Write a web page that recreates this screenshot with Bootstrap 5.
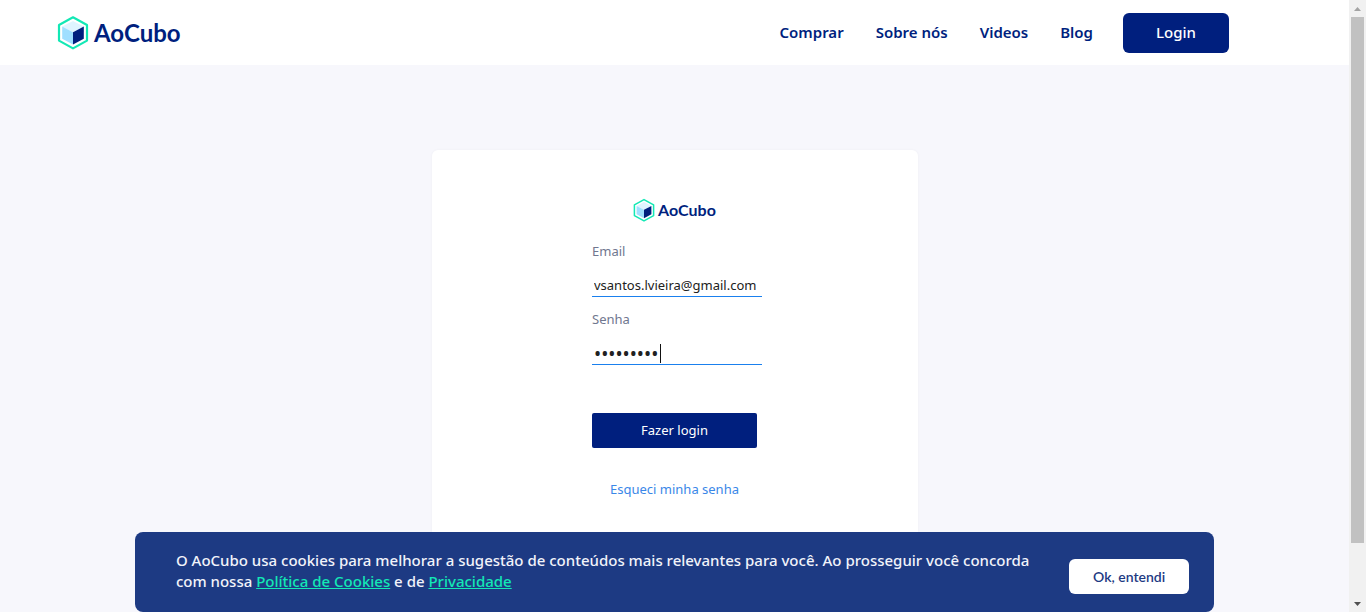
<!DOCTYPE html>
<html lang="pt-BR">
<head>
<meta charset="utf-8">
<meta name="viewport" content="width=device-width, initial-scale=1">
<title>AoCubo - Login</title>
<link href="https://cdn.jsdelivr.net/npm/bootstrap@5.3.0/dist/css/bootstrap.min.css" rel="stylesheet">
<style>
  :root { --navy: #001f7e; --mint: #13e8b5; }
  body { font-family: "Noto Sans", "Open Sans", sans-serif; font-size: 13px; background: #f7f7fc; }
  .page-top { min-height: 65px; padding: 0 120px 0 57px; }
  .brand { font-family: Lato, sans-serif; font-weight: 700; color: var(--navy); line-height: 1; font-size: 24px; gap: 5px; }
  .brand:hover { color: var(--navy); }
  .brand svg { width: 32px; height: 35px; }
  .brand-sm { font-size: 16px; gap: 3px; }
  .brand-sm svg { width: 22px; height: 24px; }
  .menu { gap: 30px; }
  .menu-links { gap: 32px; }
  .menu a { color: var(--navy); font-size: 15px; font-weight: 600; text-decoration: none; }
  .btn-navy { --bs-btn-bg: var(--navy); --bs-btn-color: #fff; --bs-btn-hover-bg: #00175f; --bs-btn-hover-color: #fff; border: 0; }
  .btn-top { width: 106px; height: 40px; padding: 0; font-size: 15px; font-weight: 500; border-radius: 6px; }
  .login-card { width: 486px; min-height: 440px; margin-top: 85px; padding-top: 48px; border-radius: 6px; box-shadow: 0 0 3px rgba(0, 0, 60, .04); }
  .login-form { width: 165px; margin-top: 19px; }
  .login-form label { color: #70778f; line-height: 20px; margin-bottom: 12px; }
  .login-form .field-group + .field-group { margin-top: 12px; }
  .field { width: 170px; height: 24px; padding: 0 2px; border: 0; border-bottom: 1px solid #1a80ee; background: transparent; color: #212121; outline: 0; }
  .field[type=password] { font-size: 19px; line-height: 20px; padding: 3px 2px 0; }
  .caret { left: 68px; top: 3px; width: 1px; height: 19px; background: #111; }
  .btn-send { height: 35px; padding: 0; border-radius: 2px; font-size: 13px; margin-top: 48px; }
  .forgot { color: #3a87e8; line-height: 20px; margin-top: 31px; text-decoration: none; }
  .cookies { width: 80%; min-height: 80px; left: 10%; bottom: 0; padding: 18px 25px 18px 41px; gap: 24px; border-radius: 8px; background: #1d3a83; color: #f1f3fa; font-size: 15px; font-weight: 500; line-height: 21px; }
  .cookies a { color: var(--mint); }
  .cookies p { max-width: 860px; }
  .btn-ok { flex: none; width: 120px; height: 35px; margin-top: 9px; padding: 0; border-radius: 6px; background: #fff; color: #1d3a83; font: 600 14px Lato, sans-serif; }
  .btn-ok:hover { background: #e9edf8; }
  .scroll-rail { width: 17px; background: #f1f1f1; }
  .scroll-rail svg { width: 17px; height: 17px; flex: none; }
  .scroll-thumb { width: 13px; height: 91%; background: #c1c1c1; }
  .scroll-track { min-height: 0; flex: 1; }
</style>
</head>
<body>
<svg class="d-none" aria-hidden="true">
  <symbol id="cube" viewBox="0 0 32 35">
    <path d="M16 2.300 30 10V25.600L16 33.400 2 25.600V10Z" fill="#fff" stroke="#13e8b5" stroke-width="2.200" stroke-linejoin="round"/>
    <path d="M16 6 26.800 11.500 16 17.200 5.200 11.500Z" fill="#dff4ff"/>
    <path d="M5.200 11.500 16 17.200V29.400L5.200 23.800Z" fill="#9fdfff"/>
    <path d="M26.800 11.500 16 17.200V29.400L26.800 23.800Z" fill="#001f7e"/>
  </symbol>
</svg>
<div class="d-flex vh-100 overflow-hidden">
  <div class="flex-grow-1 position-relative overflow-hidden">
    <header class="page-top bg-white d-flex align-items-center justify-content-between">
      <a href="#" class="brand d-flex align-items-center text-decoration-none"><svg aria-hidden="true"><use href="#cube"/></svg><span>AoCubo</span></a>
      <nav class="menu d-flex align-items-center">
        <div class="menu-links d-flex">
          <a href="#">Comprar</a>
          <a href="#">Sobre nós</a>
          <a href="#">Videos</a>
          <a href="#">Blog</a>
        </div>
        <button type="button" class="btn btn-navy btn-top">Login</button>
      </nav>
    </header>
    <main class="login-card bg-white mx-auto d-flex flex-column align-items-center">
      <div class="brand brand-sm d-flex align-items-center"><svg aria-hidden="true"><use href="#cube"/></svg><span>AoCubo</span></div>
      <form class="login-form d-flex flex-column">
        <div class="field-group">
          <label for="email" class="d-block">Email</label>
          <input id="email" type="email" class="field d-block" value="vsantos.lvieira@gmail.com">
        </div>
        <div class="field-group">
          <label for="senha" class="d-block">Senha</label>
          <div class="position-relative">
            <input id="senha" type="password" class="field d-block" value="123456789">
            <span class="caret position-absolute"></span>
          </div>
        </div>
        <button type="submit" class="btn btn-navy btn-send">Fazer login</button>
        <a href="#" class="forgot text-center">Esqueci minha senha</a>
      </form>
    </main>
    <aside class="cookies position-absolute d-flex justify-content-between align-items-start">
      <p class="mb-0">O AoCubo usa cookies para melhorar a sugestão de conteúdos mais relevantes para você. Ao prosseguir você concorda com nossa <a href="#">Política de Cookies</a> e de <a href="#">Privacidade</a></p>
      <button type="button" class="btn btn-ok">Ok, entendi</button>
    </aside>
  </div>
  <div class="scroll-rail d-flex flex-column align-items-center flex-shrink-0" aria-hidden="true">
    <svg viewBox="0 0 17 17"><path d="M5 11h7L8.500 7Z" fill="#a3a3a3"/></svg>
    <div class="scroll-track"><div class="scroll-thumb"></div></div>
    <svg viewBox="0 0 17 17"><path d="M5 7h7L8.500 11Z" fill="#505050"/></svg>
  </div>
</div>
<script src="https://cdn.jsdelivr.net/npm/bootstrap@5.3.0/dist/js/bootstrap.bundle.min.js"></script>
</body>
</html>
